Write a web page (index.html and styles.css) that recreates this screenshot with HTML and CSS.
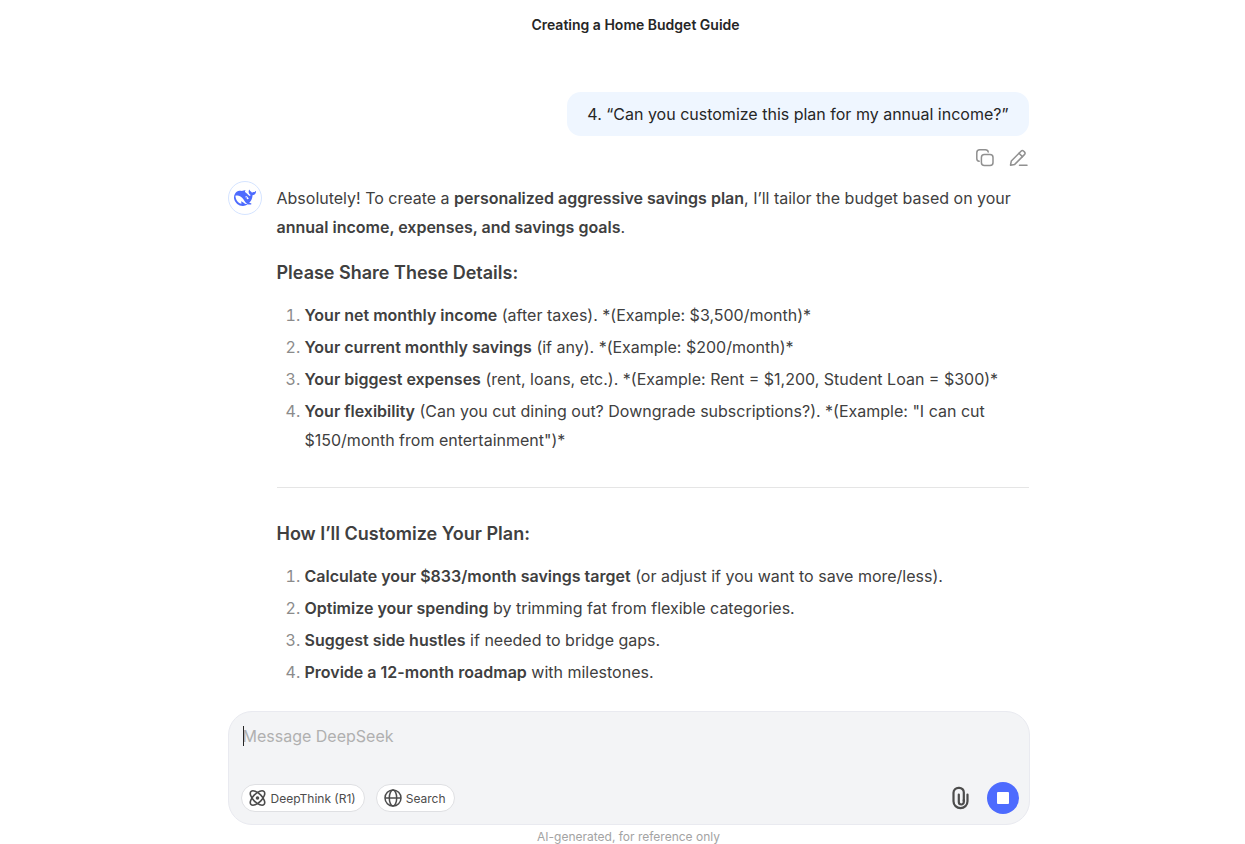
FILE: index.html
```html
<!DOCTYPE html>
<html lang="en">
<head>
    <meta charset="UTF-8">
    <meta name="viewport" content="width=device-width, initial-scale=1.0">
    <title>Creating a Home Budget Guide</title>
    <link rel="stylesheet" href="styles.css">
</head>
<body>
    <div class="page">
        <header class="header">
            <h1>Creating a Home Budget Guide</h1>
        </header>

        <main class="chat">
            <div class="user-message">
                <p class="bubble">4. “Can you customize this plan for my annual income?”</p>
                <div class="actions">
                    <button class="icon-btn" aria-label="Copy">
                        <svg width="20" height="20" viewBox="0 0 20 20" fill="none" stroke="currentColor" stroke-width="1.5" stroke-linecap="round">
                            <rect x="6.4" y="6.4" width="11.6" height="11.2" rx="3"/>
                            <path d="M4.2 13.2C2.6 13 1.8 12 1.8 10.4V4.8c0-2 1-3 3-3h5.600c1.600 0 2.600.8 2.800 2.200"/>
                        </svg>
                    </button>
                    <button class="icon-btn" aria-label="Edit">
                        <svg width="20" height="20" viewBox="0 0 20 20" fill="none" stroke="currentColor" stroke-width="1.5" stroke-linecap="round" stroke-linejoin="round">
                            <path d="M1.500 17.200l.8-4.200L12 3.200c.8-.8 1.900-.8 2.700 0l.7.7c.8.8.8 1.900 0 2.700L5.700 16.400z"/>
                            <path d="M10 5.200l3.400 3.400M10.500 17.300h7.500"/>
                        </svg>
                    </button>
                </div>
            </div>

            <div class="reply">
                <div class="avatar">
                    <svg width="22" height="22" viewBox="0 0 24 24" fill="currentColor" aria-hidden="true">
                        <path d="M23.748 4.482c-.254-.124-.364.113-.512.234-.051.039-.094.09-.137.136-.372.397-.806.657-1.373.626-.829-.046-1.537.214-2.163.848-.133-.782-.575-1.248-1.247-1.548-.352-.156-.708-.311-.955-.65-.172-.241-.219-.51-.305-.774-.055-.16-.11-.323-.293-.35-.2-.031-.278.136-.356.276-.313.572-.434 1.202-.422 1.84.027 1.436.633 2.58 1.838 3.393.137.093.172.187.129.323-.082.28-.18.552-.266.833-.055.179-.137.217-.329.14a5.526 5.526 0 01-1.736-1.18c-.857-.828-1.631-1.742-2.597-2.458a11.365 11.365 0 00-.689-.471c-.985-.957.13-1.743.388-1.836.27-.098.093-.432-.779-.428-.872.004-1.67.295-2.687.684a3.055 3.055 0 01-.465.137 9.597 9.597 0 00-2.883-.102c-1.885.21-3.39 1.102-4.497 2.623C.082 8.606-.231 10.684.152 12.85c.403 2.284 1.569 4.175 3.36 5.653 1.858 1.533 3.997 2.284 6.438 2.14 1.482-.085 3.133-.284 4.994-1.86.47.234.962.327 1.78.397.63.059 1.236-.03 1.705-.128.735-.156.684-.837.419-.961-2.155-1.004-1.682-.595-2.113-.926 1.096-1.296 2.746-2.642 3.392-7.003.05-.347.007-.565 0-.845-.004-.17.035-.237.23-.256a4.173 4.173 0 001.545-.475c1.396-.763 1.96-2.015 2.093-3.517.02-.23-.004-.467-.247-.588zM11.581 18c-2.089-1.642-3.102-2.183-3.52-2.16-.392.024-.321.471-.235.763.09.288.207.486.371.739.114.167.192.416-.113.603-.673.416-1.842-.14-1.897-.167-1.361-.802-2.5-1.86-3.301-3.307-.774-1.393-1.224-2.887-1.298-4.482-.02-.386.093-.522.477-.592a4.696 4.696 0 011.529-.039c2.132.312 3.946 1.265 5.468 2.774.868.86 1.525 1.887 2.202 2.891.72 1.066 1.494 2.082 2.48 2.914.348.292.625.514.891.677-.802.09-2.14.11-3.054-.614zm1-6.44a.306.306 0 01.415-.287.302.302 0 01.2.288.306.306 0 01-.31.307.303.303 0 01-.304-.308zm3.11 1.596c-.2.081-.399.151-.59.16a1.245 1.245 0 01-.798-.254c-.274-.23-.47-.358-.552-.758a1.73 1.73 0 01.016-.588c.07-.327-.008-.537-.239-.727-.187-.156-.426-.199-.688-.199a.559.559 0 01-.254-.078c-.11-.054-.2-.19-.114-.358.028-.054.16-.186.192-.21.356-.202.767-.136 1.146.016.352.144.618.408 1.001.782.391.451.462.576.685.914.176.265.336.537.445.848.067.195-.019.354-.25.452z"/>
                    </svg>
                </div>
                <div class="content">
                    <p>Absolutely! To create a <strong>personalized aggressive savings plan</strong>, I’ll tailor the budget based on your <strong>annual income, expenses, and savings goals</strong>.</p>
                    <h3>Please Share These Details:</h3>
                    <ol>
                        <li><strong>Your net monthly income</strong> (after taxes). *(Example: $3,500/month)*</li>
                        <li><strong>Your current monthly savings</strong> (if any). *(Example: $200/month)*</li>
                        <li><strong>Your biggest expenses</strong> (rent, loans, etc.). *(Example: Rent = $1,200, Student Loan = $300)*</li>
                        <li><strong>Your flexibility</strong> (Can you cut dining out? Downgrade subscriptions?). *(Example: "I can cut $150/month from entertainment")*</li>
                    </ol>
                    <hr>
                    <h3>How I’ll Customize Your Plan:</h3>
                    <ol>
                        <li><strong>Calculate your $833/month savings target</strong> (or adjust if you want to save more/less).</li>
                        <li><strong>Optimize your spending</strong> by trimming fat from flexible categories.</li>
                        <li><strong>Suggest side hustles</strong> if needed to bridge gaps.</li>
                        <li><strong>Provide a 12-month roadmap</strong> with milestones.</li>
                    </ol>
                </div>
            </div>
        </main>

        <footer class="footer">
            <form class="composer">
                <div class="message-box">
                    <textarea id="message" rows="1" placeholder="Message DeepSeek" aria-label="Message DeepSeek"></textarea>
                    <span class="caret"></span>
                </div>
                <div class="toolbar">
                    <button type="button" class="pill">
                        <svg width="18" height="18" viewBox="0 0 18 18" fill="none" stroke="currentColor" stroke-width="1.6" aria-hidden="true">
                            <ellipse cx="8.500" cy="9" rx="9.200" ry="4.400" transform="rotate(45 8.5 9)"/>
                            <ellipse cx="8.500" cy="9" rx="9.200" ry="4.400" transform="rotate(-45 8.5 9)"/>
                            <circle cx="8.500" cy="9" r="1.800" fill="currentColor" stroke="none"/>
                        </svg>
                        DeepThink (R1)
                    </button>
                    <button type="button" class="pill">
                        <svg width="18" height="18" viewBox="0 0 18 18" fill="none" stroke="currentColor" stroke-width="1.500" aria-hidden="true">
                            <circle cx="9" cy="9" r="8"/>
                            <ellipse cx="9" cy="9" rx="3.700" ry="8"/>
                            <path d="M1 9h16"/>
                        </svg>
                        Search
                    </button>
                    <button type="button" class="attach" aria-label="Attach file">
                        <svg width="18" height="24" viewBox="0 0 18 24" fill="none" stroke="currentColor" stroke-width="2.200" stroke-linecap="round">
                            <path d="M12.800 15V6.300a4.500 4.500 0 0 0-4.500-4.500h-.8A5 5 0 0 0 2.500 6.800v8.400a7 7 0 0 0 14 0V8.500"/>
                            <path d="M12.800 14v2a2.500 2.500 0 0 1-5 0V8.500"/>
                        </svg>
                    </button>
                    <button type="button" class="stop" aria-label="Stop"></button>
                </div>
            </form>
            <p class="note">AI-generated, for reference only</p>
        </footer>
    </div>
</body>
</html>
```
FILE: styles.css
```css
* {
    box-sizing: border-box;
}
body {
    margin: 0;
    font-family: Inter, sans-serif;
    font-size: 16px;
    color: #404040;
    background-color: #fff;
}
h1, h3, p, ol {
    margin: 0;
}
button {
    border: none;
    padding: 0;
    font-family: inherit;
    cursor: pointer;
}
svg {
    display: block;
    flex: none;
    overflow: visible;
}
strong {
    font-weight: 600;
}
.page {
    display: flex;
    flex-direction: column;
    min-height: 100vh;
    padding-left: 12px;
}
.header {
    padding: 14px 0 14px 14px;
    text-align: center;
}
.header h1 {
    font-size: 14px;
    line-height: 22px;
    font-weight: 600;
    color: #262626;
}
.chat,
.footer {
    width: 100%;
    max-width: 802px;
    margin: 0 auto;
}
.chat {
    padding-top: 42px;
    padding-bottom: 24px;
}
.user-message {
    display: flex;
    flex-direction: column;
    align-items: flex-end;
    padding-right: 1px;
}
.bubble {
    padding: 10px 20px;
    line-height: 24px;
    color: #262626;
    background-color: #eff6ff;
    border-radius: 14px;
}
.actions {
    display: flex;
    gap: 14px;
    margin-top: 12px;
}
.icon-btn {
    color: #909090;
    background: none;
}
.reply {
    display: flex;
    gap: 15px;
    margin-top: 13px;
    padding-right: 1px;
}
.avatar {
    display: flex;
    flex: none;
    align-items: center;
    justify-content: center;
    width: 34px;
    height: 34px;
    color: #4d6bfe;
    border: 1px solid #d5e4ff;
    border-radius: 50%;
}
.content {
    flex: 1;
    padding-top: 3px;
    line-height: 29px;
}
.content h3 {
    margin: 17px 0 15px;
    font-size: 18px;
    line-height: 27px;
    font-weight: 600;
}
.content ol {
    padding-left: 28px;
}
.content li + li {
    margin-top: 3px;
}
.content li::marker {
    color: #8b8b8b;
}
.content hr {
    height: 1px;
    margin: 32px 0;
    border: none;
    background-color: #e5e5e5;
}
.footer {
    margin-top: auto;
}
.composer {
    padding: 11px 10px 10px 12px;
    background-color: #f3f4f6;
    border: 1px solid #e9eaf0;
    border-radius: 24px;
}
.message-box {
    position: relative;
    margin-bottom: 33px;
}
.message-box textarea {
    display: block;
    width: 100%;
    height: 26px;
    padding: 0 2px;
    border: none;
    outline: none;
    resize: none;
    font-family: inherit;
    font-size: 16px;
    line-height: 26px;
    background: none;
}
.message-box textarea::placeholder {
    color: #b0b0b0;
}
.caret {
    position: absolute;
    left: 2px;
    top: 3px;
    width: 1px;
    height: 20px;
    background-color: #262626;
}
.toolbar {
    display: flex;
    align-items: center;
    gap: 11px;
}
.pill {
    display: flex;
    align-items: center;
    gap: 4px;
    height: 28px;
    padding: 0 8px 0 7px;
    font-size: 12px;
    color: #4c4c4c;
    background-color: #fff;
    border: 1px solid #dfe0e3;
    border-radius: 14px;
}
.attach {
    margin-left: auto;
    color: #4c4c4c;
    background: none;
}
.stop {
    display: flex;
    align-items: center;
    justify-content: center;
    width: 32px;
    height: 32px;
    margin-left: 7px;
    background-color: #4d6bfe;
    border-radius: 50%;
}
.stop::before {
    content: "";
    width: 12px;
    height: 12px;
    background-color: #fff;
    border-radius: 1px;
}
.note {
    padding: 3px 0 0;
    font-size: 12px;
    line-height: 17px;
    text-align: center;
    color: #a3a3a3;
}
```
